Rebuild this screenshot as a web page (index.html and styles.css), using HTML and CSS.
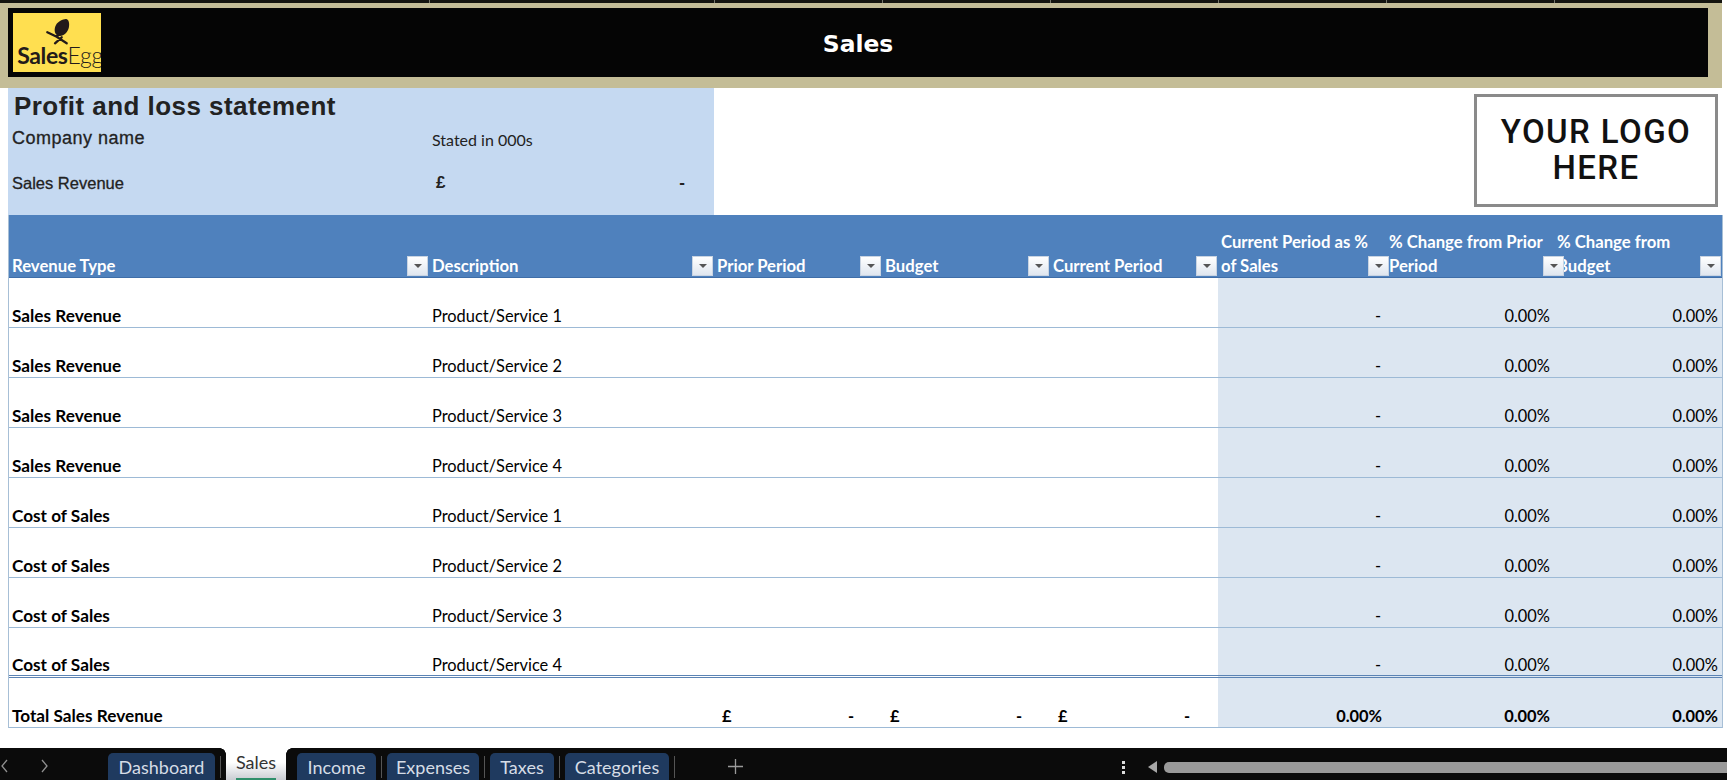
FILE: index.html
```html
<!DOCTYPE html>
<html lang="en">
<head>
<meta charset="utf-8">
<title>Sales</title>
<link rel="stylesheet" href="styles.css">
</head>
<body>
<main class="sheet">
  <div class="strip">
    <span class="tick t1"></span><span class="tick"></span><span class="tick"></span><span class="tick"></span><span class="tick"></span><span class="tick"></span><span class="tick"></span>
  </div>
  <header class="banner">
    <div class="band">
      <div class="logo">
        <svg class="egg" width="30" height="28" viewBox="0 0 30 28" aria-hidden="true">
          <path d="M12.500 17.500c-3.500-2-3.400-7-1.500-10.500C12.500 3.800 18.500.8 21 1c3 .2 3.700 4.800 2.800 8.800-1.100 5.200-6.800 10-11.300 7.700z" fill="#231a1a"/>
          <path d="M2.300 14.300l9.400 4.400 10 6.600M10 25.300l6.700-6M11.500 18.500l2.500-2" stroke="#231a1a" stroke-width="2.300" fill="none" stroke-linecap="round"/>
        </svg>
        <div class="wordmark"><b>Sales</b><span>Egg</span></div>
      </div>
      <h1 class="title">Sales</h1>
    </div>
  </header>
  <section class="intro">
    <div class="panel">
      <h2 class="pl">Profit and loss statement</h2>
      <div class="meta meta-a"><span class="company">Company name</span><span class="stated">Stated in 000s</span></div>
      <div class="meta meta-b"><span class="rev">Sales Revenue</span><span class="amt"><b>£</b><b>-</b></span></div>
    </div>
    <div class="yourlogo">YOUR LOGO<br>HERE</div>
  </section>
  <table class="grid">
    <colgroup>
      <col class="c1"><col class="c2"><col class="cn"><col class="cn"><col class="cn"><col class="cn"><col class="cn"><col class="cn">
    </colgroup>
    <thead>
      <tr>
        <th><div class="th"><span>Revenue Type</span><i class="flt"></i></div></th>
        <th><div class="th"><span>Description</span><i class="flt"></i></div></th>
        <th><div class="th"><span>Prior Period</span><i class="flt"></i></div></th>
        <th><div class="th"><span>Budget</span><i class="flt"></i></div></th>
        <th><div class="th"><span>Current Period</span><i class="flt"></i></div></th>
        <th><div class="th"><span>Current Period as %<br>of Sales</span><i class="flt"></i></div></th>
        <th><div class="th"><span>% Change from Prior<br>Period</span><i class="flt"></i></div></th>
        <th><div class="th"><span>% Change from<br>Budget</span><i class="flt"></i></div></th>
      </tr>
    </thead>
    <tbody>
      <tr><td class="nm">Sales Revenue</td><td class="ds">Product/Service 1</td><td></td><td></td><td></td><td class="sh dash">-</td><td class="sh pc">0.00%</td><td class="sh pc">0.00%</td></tr>
      <tr><td class="nm">Sales Revenue</td><td class="ds">Product/Service 2</td><td></td><td></td><td></td><td class="sh dash">-</td><td class="sh pc">0.00%</td><td class="sh pc">0.00%</td></tr>
      <tr><td class="nm">Sales Revenue</td><td class="ds">Product/Service 3</td><td></td><td></td><td></td><td class="sh dash">-</td><td class="sh pc">0.00%</td><td class="sh pc">0.00%</td></tr>
      <tr><td class="nm">Sales Revenue</td><td class="ds">Product/Service 4</td><td></td><td></td><td></td><td class="sh dash">-</td><td class="sh pc">0.00%</td><td class="sh pc">0.00%</td></tr>
      <tr><td class="nm">Cost of Sales</td><td class="ds">Product/Service 1</td><td></td><td></td><td></td><td class="sh dash">-</td><td class="sh pc">0.00%</td><td class="sh pc">0.00%</td></tr>
      <tr><td class="nm">Cost of Sales</td><td class="ds">Product/Service 2</td><td></td><td></td><td></td><td class="sh dash">-</td><td class="sh pc">0.00%</td><td class="sh pc">0.00%</td></tr>
      <tr><td class="nm">Cost of Sales</td><td class="ds">Product/Service 3</td><td></td><td></td><td></td><td class="sh dash">-</td><td class="sh pc">0.00%</td><td class="sh pc">0.00%</td></tr>
      <tr class="last"><td class="nm">Cost of Sales</td><td class="ds">Product/Service 4</td><td></td><td></td><td></td><td class="sh dash">-</td><td class="sh pc">0.00%</td><td class="sh pc">0.00%</td></tr>
    </tbody>
    <tfoot>
      <tr>
        <td class="nm">Total Sales Revenue</td><td></td>
        <td><div class="acc"><b>£</b><b>-</b></div></td>
        <td><div class="acc"><b>£</b><b>-</b></div></td>
        <td><div class="acc"><b>£</b><b>-</b></div></td>
        <td class="sh pc tot">0.00%</td><td class="sh pc tot">0.00%</td><td class="sh pc tot">0.00%</td>
      </tr>
    </tfoot>
  </table>
</main>
<footer class="tabbar">
  <div class="nav"><svg width="10" height="14" viewBox="0 0 10 14" aria-hidden="true"><path d="M7 1L2 7l5 6" stroke="#8f8f8f" fill="none" stroke-width="1.300"/></svg><svg width="10" height="14" viewBox="0 0 10 14" aria-hidden="true"><path d="M3 1l5 6-5 6" stroke="#8f8f8f" fill="none" stroke-width="1.300"/></svg></div>
  <nav class="tabs">
    <span class="tab w1">Dashboard</span><i class="sep"></i>
    <span class="tab active">Sales</span><i class="sep hidden"></i>
    <span class="tab w3">Income</span><i class="sep"></i>
    <span class="tab w4">Expenses</span><i class="sep"></i>
    <span class="tab w5">Taxes</span><i class="sep"></i>
    <span class="tab w6">Categories</span><i class="sep"></i>
  </nav>
  <svg class="plus" width="15" height="15" viewBox="0 0 15 15" aria-hidden="true"><path d="M7.500 0v15M0 7.500h15" stroke="#9a9a9a" stroke-width="1.300"/></svg>
  <div class="dots"><i></i><i></i><i></i></div>
  <svg class="arrow" width="9" height="12" viewBox="0 0 9 12" aria-hidden="true"><path d="M9 0v12L0 6z" fill="#a6a6a6"/></svg>
  <div class="thumb"></div>
</footer>
</body>
</html>
```
FILE: styles.css
```css
* { box-sizing: border-box; }
html, body { margin: 0; padding: 0; }
body {
  width: 1727px;
  height: 780px;
  overflow: hidden;
  background: #fff;
  display: flex;
  flex-direction: column;
  font-family: Lato, "Liberation Sans", sans-serif;
  color: #000;
}
.sheet { height: 748px; flex: none; }

/* top strip and banner */
.strip {
  height: 3px;
  margin-right: 5px;
  padding-left: 429px;
  background: #14140f;
  display: flex;
}
.tick { width: 168px; flex: none; border-left: 1px solid #77766a; }
.tick.t1 { width: 285px; }
.banner {
  height: 85px;
  margin-right: 5px;
  padding: 5px 14px 11px 8px;
  background: #c4bd97;
}
.band {
  height: 69px;
  background: #050505;
  padding: 5px;
  display: grid;
  grid-template-columns: 1fr auto 1fr;
  align-items: center;
}
.logo {
  width: 88px;
  height: 59px;
  background: #ffdf50;
  display: flex;
  flex-direction: column;
  align-items: center;
  padding-top: 5px;
  overflow: hidden;
}
.egg { flex: none; margin-left: 6px; }
.wordmark {
  font-family: Lato, sans-serif;
  font-size: 23px;
  line-height: 22px;
  letter-spacing: -.4px;
  color: #231a1a;
  white-space: nowrap;
  margin-top: -2px;
  margin-left: 6px;
}
.wordmark b { font-weight: 700; }
.wordmark span { font-weight: 300; }
.title {
  margin: 2px 0 0;
  font-family: "DejaVu Sans", sans-serif;
  font-size: 23.400px;
  font-weight: 700;
  color: #fff;
}

/* intro */
.intro { height: 127px; display: flex; padding-left: 8px; padding-right: 9px; }
.panel {
  width: 706px;
  height: 127px;
  background: #c5d9f1;
  font-family: "Liberation Sans", sans-serif;
  color: #222;
  padding: 4px 0 0 6px;
}
.pl { margin: 0; font-size: 26px; line-height: 29px; font-weight: 700; letter-spacing: .45px; }
.meta { display: flex; align-items: center; margin-left: -3px; }
.meta-a { height: 30px; margin-top: 2px; }
.meta-b { height: 30px; margin-top: 15px; }
.company { width: 421px; padding-left: 1px; font-size: 18px; letter-spacing: .5px; -webkit-text-stroke: .3px #222; }
.stated { font-family: Lato, sans-serif; font-size: 16px; padding-top: 3px; }
.rev { width: 421px; padding-left: 1px; font-size: 16.500px; -webkit-text-stroke: .3px #222; }
.amt { width: 281px; padding: 0 28px 0 4px; display: flex; justify-content: space-between; font-size: 17px; }
.yourlogo {
  width: 244px;
  height: 113px;
  margin: 6px 0 0 auto;
  border: 3px solid #8a8a8a;
  background: #fff;
  text-align: center;
  font-family: Roboto, sans-serif;
  font-size: 33px;
  font-weight: 500;
  line-height: 36px;
  letter-spacing: 1.400px;
  color: #111;
  padding-top: 17px;
}

/* table */
.grid {
  width: 1714px;
  margin-left: 8px;
  border-collapse: separate;
  border-spacing: 0;
  table-layout: fixed;
  font-size: 16.400px;
  border-left: 1px solid #a7bfd6;
  border-right: 1px solid #a7bfd6;
}
.c1 { width: 420px; }
.c2 { width: 285px; }
.cn { width: 168px; }
th {
  height: 63px;
  padding: 0;
  background: #4f81bd;
  vertical-align: bottom;
  text-align: left;
  color: #fff;
  font-size: 16.700px;
  font-weight: 700;
  border-bottom: 1px solid #3f6ea8;
}
.th {
  display: flex;
  justify-content: space-between;
  align-items: flex-end;
  padding: 0 1px 1px 3px;
  line-height: 24px;
}
.th span { white-space: nowrap; margin-bottom: -2px; }
.flt {
  flex: none;
  width: 21px;
  height: 20px;
  background: linear-gradient(#fff, #dfe6ef);
  border: 1px solid #c9d4e2;
  position: relative;
}
.flt::after {
  content: "";
  position: absolute;
  left: 6px;
  top: 7px;
  border: 4px solid transparent;
  border-top: 4px solid #555;
  border-bottom: 0;
}
td {
  height: 50px;
  padding: 0 0 1px;
  vertical-align: bottom;
  line-height: 20px;
  border-bottom: 1px solid #9dbad6;
  white-space: nowrap;
}
.last td { border-bottom: 3px double #5b83b4; padding-bottom: 0; }
.nm { font-weight: 700; font-size: 17.200px; padding-left: 3px; }
.ds { padding-left: 3px; }
.sh { background: #dce6f1; }
.pc { text-align: right; padding-right: 4px; }
.dash { text-align: right; padding-right: 5px; }
.tot { font-weight: 700; }
.acc { display: flex; justify-content: space-between; padding: 0 28px 0 8px; }

/* bottom bar */
.tabbar {
  height: 32px;
  flex: none;
  background: #0b0b0b;
  display: flex;
  align-items: flex-start;
}
.nav { width: 108px; flex: none; display: flex; gap: 29px; padding: 11px 0 0 0; }
.tabs { display: flex; align-items: flex-start; flex: none; }
.tab {
  height: 30px;
  margin-top: 5px;
  background: #1f3a5f;
  border-radius: 5px 5px 0 0;
  color: #d6dde6;
  font-size: 18px;
  line-height: 28px;
  text-align: center;
}
.w1 { width: 107px; }
.w3 { width: 79px; }
.w4 { width: 92px; }
.w5 { width: 64px; }
.w6 { width: 104px; }
.sep { width: 1px; height: 22px; margin: 8px 5px 0; background: #555; flex: none; }
.sep.hidden { background: transparent; margin: 0 5px; }
.tab.active {
  width: 60px;
  height: 32px;
  margin: 0;
  background:
    linear-gradient(#2f8f6b, #2f8f6b) center bottom / 40px 2px no-repeat,
    linear-gradient(#fff 45%, #c9ccd2);
  color: #333;
  border-radius: 0;
  line-height: 28px;
  position: relative;
}
.tab.active::before,
.tab.active::after {
  content: "";
  position: absolute;
  top: 0;
  width: 6px;
  height: 6px;
}
.tab.active::before {
  left: -6px;
  background: radial-gradient(circle at 0 100%, #0b0b0b 5.500px, #fff 6px);
}
.tab.active::after {
  right: -6px;
  background: radial-gradient(circle at 100% 100%, #0b0b0b 5.500px, #fff 6px);
}
.plus { margin: 11px 0 0 48px; flex: none; }
.dots {
  margin: 13px 0 0 379px;
  display: flex;
  flex-direction: column;
  gap: 2px;
  flex: none;
}
.dots i { width: 3px; height: 3px; background: #ddd; display: block; }
.arrow { margin: 13px 0 0 23px; flex: none; }
.thumb {
  margin: 14px 0 0 7px;
  height: 11px;
  flex: 1;
  background: #9a9a9a;
  border-radius: 5px 0 0 5px;
}
```
